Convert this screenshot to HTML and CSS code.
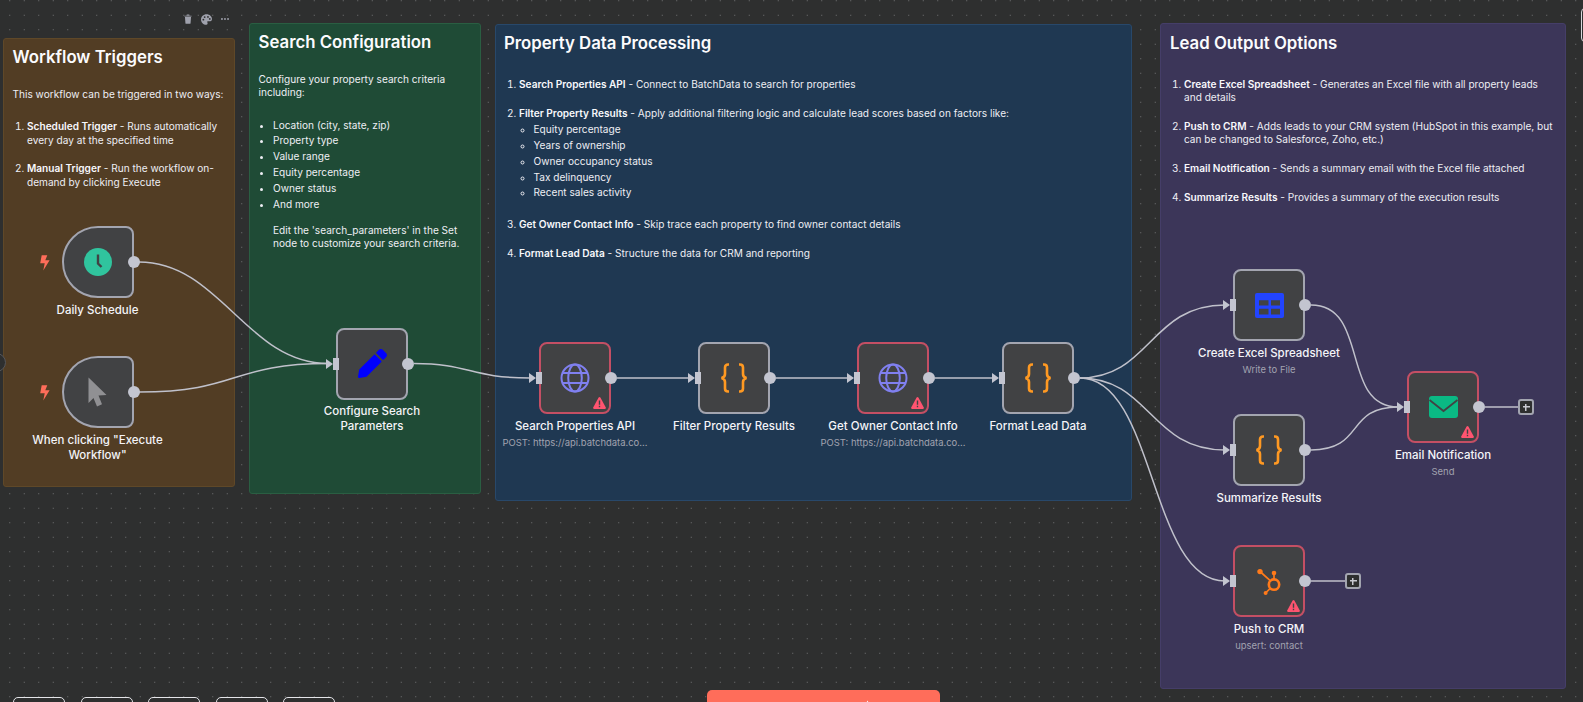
FILE: index.html
```html
<!DOCTYPE html>
<html lang="en">
<head>
    <meta charset="UTF-8">
    <title>Property Lead Workflow</title>
    <link rel="stylesheet" href="styles.css">
</head>
<body>
    <main class="canvas">
        <!-- sticky notes -->
        <section class="sticky sticky-triggers">
            <div class="sticky-tools">
                <svg class="tool-icon tool-trash" viewBox="0 0 10 12"><path d="M0.5 2H9.5V3H0.5ZM3.5 0.5H6.5L7 1.5H3ZM1.2 3.6H8.8L8.2 11.2Q8.1 12 7.3 12H2.7Q1.9 12 1.8 11.2Z"/></svg>
                <svg class="tool-icon tool-palette" viewBox="0 0 12 12"><path fill-rule="evenodd" d="M6 0.2C9.5 0.2 12 2.6 12 5.4C12 7.4 10.4 8 8.8 8H7.6C6.9 8 6.6 8.7 7 9.3C7.5 10.2 7.1 11.8 5.8 11.8C2.6 11.8 0 9.2 0 6C0 2.8 2.7 0.2 6 0.2ZM2.6 5.2A1 1 0 1 0 2.6 7.2A1 1 0 1 0 2.6 5.2ZM4 2.4A1 1 0 1 0 4 4.4A1 1 0 1 0 4 2.4ZM7.6 2.2A1 1 0 1 0 7.6 4.2A1 1 0 1 0 7.6 2.2ZM9.6 4.4A1 1 0 1 0 9.6 6.4A1 1 0 1 0 9.6 4.4Z"/></svg>
                <svg class="tool-icon tool-dots" viewBox="0 0 10 4"><circle cx="1.2" cy="2" r="1.2"/><circle cx="5" cy="2" r="1.2"/><circle cx="8.8" cy="2" r="1.2"/></svg>
            </div>
            <h2>Workflow Triggers</h2>
            <p class="first">This workflow can be triggered in two ways:</p>
            <ol>
                <li><b>Scheduled Trigger</b> - Runs automatically every day at the specified time</li>
                <li><b>Manual Trigger</b> - Run the workflow on-demand by clicking Execute</li>
            </ol>
        </section>

        <section class="sticky sticky-search">
            <h2>Search Configuration</h2>
            <p class="first">Configure your property search criteria including:</p>
            <ul>
                <li>Location (city, state, zip)</li>
                <li>Property type</li>
                <li>Value range</li>
                <li>Equity percentage</li>
                <li>Owner status</li>
                <li>And more</li>
            </ul>
            <p class="search-note">Edit the 'search_parameters' in the Set node to customize your search criteria.</p>
        </section>

        <section class="sticky sticky-property">
            <h2>Property Data Processing</h2>
            <ol>
                <li><b>Search Properties API</b> - Connect to BatchData to search for properties</li>
                <li><b>Filter Property Results</b> - Apply additional filtering logic and calculate lead scores based on factors like:
                    <ul class="sub-list">
                        <li>Equity percentage</li>
                        <li>Years of ownership</li>
                        <li>Owner occupancy status</li>
                        <li>Tax delinquency</li>
                        <li>Recent sales activity</li>
                    </ul>
                </li>
                <li><b>Get Owner Contact Info</b> - Skip trace each property to find owner contact details</li>
                <li><b>Format Lead Data</b> - Structure the data for CRM and reporting</li>
            </ol>
        </section>

        <section class="sticky sticky-output">
            <h2>Lead Output Options</h2>
            <ol>
                <li><b>Create Excel Spreadsheet</b> - Generates an Excel file with all property leads and details</li>
                <li><b>Push to CRM</b> - Adds leads to your CRM system (HubSpot in this example, but can be changed to Salesforce, Zoho, etc.)</li>
                <li><b>Email Notification</b> - Sends a summary email with the Excel file attached</li>
                <li><b>Summarize Results</b> - Provides a summary of the execution results</li>
            </ol>
        </section>

        <!-- connections -->
        <svg class="wires" viewBox="0 0 1583 702">
            <path d="M139 262C220 262 247 363.5 328 363.5"/>
            <path d="M139 392C240 392 230 363.5 328 363.5"/>
            <path d="M414 363.5C470 363.5 470 378 530 378"/>
            <path d="M617 378H689"/>
            <path d="M776 378H848"/>
            <path d="M935 378H993"/>
            <path d="M1080 378C1150 378 1150 305 1225 305"/>
            <path d="M1080 378C1150 378 1150 450 1225 450"/>
            <path d="M1080 378C1155 378 1150 581 1225 581"/>
            <path d="M1311 305C1370 305 1340 407 1398 407"/>
            <path d="M1311 450C1365 450 1345 407 1398 407"/>
            <path d="M1485 407H1519"/>
            <path d="M1311 581H1346"/>
        </svg>

        <!-- nodes -->
        <div class="node node-daily">
            <div class="node-box trigger">
                <svg class="bolt" viewBox="0 0 10 16"><polygon points="1.7,0.3 7.3,0.3 5.3,5.3 9.6,5.3 3.3,15.6 4.7,8.3 0.2,8.3"/></svg>
                <svg class="icon-clock" viewBox="0 0 28 28"><circle cx="14" cy="14" r="14" fill="#30c49e"/><path d="M14 6.5V15.5L17.5 19" fill="none" stroke="#414244" stroke-width="2.4"/></svg>
                <span class="port-out"></span>
            </div>
            <div class="node-label">Daily Schedule</div>
        </div>

        <div class="node node-manual">
            <div class="node-box trigger">
                <svg class="bolt" viewBox="0 0 10 16"><polygon points="1.7,0.3 7.3,0.3 5.3,5.3 9.6,5.3 3.3,15.6 4.7,8.3 0.2,8.3"/></svg>
                <svg class="icon-cursor" viewBox="0 0 19 30"><polygon points="0.5,0.5 18.5,18 10.5,18.6 14,27.2 9,29.5 5.5,21 0.5,26" fill="#909093"/></svg>
                <span class="port-out"></span>
            </div>
            <div class="node-label">When clicking "Execute Workflow"</div>
        </div>

        <div class="node node-config">
            <div class="node-box">
                <span class="port-in"></span>
                <svg class="icon-pen" viewBox="0 0 512 512"><path fill="#0000ff" d="M497.9 142.1l-46.1 46.1c-4.7 4.7-12.3 4.7-17 0l-111-111c-4.7-4.7-4.7-12.3 0-17l46.1-46.1c18.7-18.7 49.1-18.7 67.9 0l60.1 60.1c18.8 18.7 18.8 49.1 0 67.9zM284.2 99.8L21.6 362.4.4 483.9c-2.9 16.4 11.4 30.6 27.8 27.8l121.5-21.3 262.6-262.6c4.7-4.7 4.7-12.3 0-17l-111-111c-4.8-4.7-12.4-4.7-17.1 0z"/></svg>
                <span class="port-out"></span>
            </div>
            <div class="node-label">Configure Search Parameters</div>
        </div>

        <div class="node node-search">
            <div class="node-box has-error">
                <span class="port-in"></span>
                <svg class="icon-globe" viewBox="0 0 30 30"><g fill="none" stroke="#8080f0" stroke-width="2"><circle cx="15" cy="15" r="13.5"/><ellipse cx="15" cy="15" rx="6.8" ry="13.5"/><path d="M3 10H27M3 20H27"/></g></svg>
                <svg class="warn" viewBox="0 0 13 12"><path fill="#ff5470" d="M5.6 0.6Q6.5 -0.4 7.4 0.6L12.8 10.4Q13.3 11.8 12 12H1Q-0.3 11.8 0.2 10.4Z"/><path fill="#414244" d="M5.8 3.6H7.2V7.8H5.8ZM5.8 8.8H7.2V10.2H5.8Z"/></svg>
                <span class="port-out"></span>
            </div>
            <div class="node-label">Search Properties API</div>
            <div class="node-sub">POST: https://api.batchdata.co...</div>
        </div>

        <div class="node node-filter">
            <div class="node-box">
                <span class="port-in"></span>
                <svg class="icon-code" viewBox="0 0 28 30"><path d="M9 1.5H8C6 1.5 5 2.7 5 4.5V11C5 13 3.5 14.5 1.5 15C3.5 15.5 5 17 5 19V25.5C5 27.3 6 28.5 8 28.5H9M19 1.5H20C22 1.5 23 2.7 23 4.5V11C23 13 24.5 14.5 26.5 15C24.5 15.5 23 17 23 19V25.5C23 27.3 22 28.5 20 28.5H19"/></svg>
                <span class="port-out"></span>
            </div>
            <div class="node-label">Filter Property Results</div>
        </div>

        <div class="node node-owner">
            <div class="node-box has-error">
                <span class="port-in"></span>
                <svg class="icon-globe" viewBox="0 0 30 30"><g fill="none" stroke="#8080f0" stroke-width="2"><circle cx="15" cy="15" r="13.5"/><ellipse cx="15" cy="15" rx="6.8" ry="13.5"/><path d="M3 10H27M3 20H27"/></g></svg>
                <svg class="warn" viewBox="0 0 13 12"><path fill="#ff5470" d="M5.6 0.6Q6.5 -0.4 7.4 0.6L12.8 10.4Q13.3 11.8 12 12H1Q-0.3 11.8 0.2 10.4Z"/><path fill="#414244" d="M5.8 3.6H7.2V7.8H5.8ZM5.8 8.8H7.2V10.2H5.8Z"/></svg>
                <span class="port-out"></span>
            </div>
            <div class="node-label">Get Owner Contact Info</div>
            <div class="node-sub">POST: https://api.batchdata.co...</div>
        </div>

        <div class="node node-format">
            <div class="node-box">
                <span class="port-in"></span>
                <svg class="icon-code" viewBox="0 0 28 30"><path d="M9 1.5H8C6 1.5 5 2.7 5 4.5V11C5 13 3.5 14.5 1.5 15C3.5 15.5 5 17 5 19V25.5C5 27.3 6 28.5 8 28.5H9M19 1.5H20C22 1.5 23 2.7 23 4.5V11C23 13 24.5 14.5 26.5 15C24.5 15.5 23 17 23 19V25.5C23 27.3 22 28.5 20 28.5H19"/></svg>
                <span class="port-out"></span>
            </div>
            <div class="node-label">Format Lead Data</div>
        </div>

        <div class="node node-excel">
            <div class="node-box">
                <span class="port-in"></span>
                <svg class="icon-table" viewBox="0 0 29 25"><rect width="29" height="25" rx="2" fill="#2244ff"/><path fill="#414244" d="M4 7.3H13.5V12.5H4ZM16 7.3H25V12.5H16ZM4 15.8H13.5V21.5H4ZM16 15.8H25V21.5H16Z"/></svg>
                <span class="port-out"></span>
            </div>
            <div class="node-label">Create Excel Spreadsheet</div>
            <div class="node-sub">Write to File</div>
        </div>

        <div class="node node-summary">
            <div class="node-box">
                <span class="port-in"></span>
                <svg class="icon-code" viewBox="0 0 28 30"><path d="M9 1.5H8C6 1.5 5 2.7 5 4.5V11C5 13 3.5 14.5 1.5 15C3.5 15.5 5 17 5 19V25.5C5 27.3 6 28.5 8 28.5H9M19 1.5H20C22 1.5 23 2.7 23 4.5V11C23 13 24.5 14.5 26.5 15C24.5 15.5 23 17 23 19V25.5C23 27.3 22 28.5 20 28.5H19"/></svg>
                <span class="port-out"></span>
            </div>
            <div class="node-label">Summarize Results</div>
        </div>

        <div class="node node-email">
            <div class="node-box has-error">
                <span class="port-in"></span>
                <svg class="icon-mail" viewBox="0 0 29 22"><rect width="29" height="22" rx="3" fill="#0ab984"/><path d="M0.5 4L14.5 15L28.5 4" fill="none" stroke="#414244" stroke-width="1.8"/></svg>
                <svg class="warn" viewBox="0 0 13 12"><path fill="#ff5470" d="M5.6 0.6Q6.5 -0.4 7.4 0.6L12.8 10.4Q13.3 11.8 12 12H1Q-0.3 11.8 0.2 10.4Z"/><path fill="#414244" d="M5.8 3.6H7.2V7.8H5.8ZM5.8 8.8H7.2V10.2H5.8Z"/></svg>
                <span class="port-out"></span>
            </div>
            <div class="node-label">Email Notification</div>
            <div class="node-sub">Send</div>
        </div>

        <div class="node node-crm">
            <div class="node-box has-error">
                <span class="port-in"></span>
                <svg class="icon-hubspot" viewBox="0 0 24 28"><g fill="none" stroke="#ff7a1a"><circle cx="17" cy="17.6" r="5.2" stroke-width="2.6"/><path d="M17 6V12M3 4.5L13.2 13.6M8.5 26L13 21.6" stroke-width="1.7"/></g><g fill="#ff7a1a"><circle cx="17" cy="6" r="2.3"/><circle cx="3" cy="4.6" r="2.7"/><circle cx="8.6" cy="26" r="2"/></g></svg>
                <svg class="warn" viewBox="0 0 13 12"><path fill="#ff5470" d="M5.6 0.6Q6.5 -0.4 7.4 0.6L12.8 10.4Q13.3 11.8 12 12H1Q-0.3 11.8 0.2 10.4Z"/><path fill="#414244" d="M5.8 3.6H7.2V7.8H5.8ZM5.8 8.8H7.2V10.2H5.8Z"/></svg>
                <span class="port-out"></span>
            </div>
            <div class="node-label">Push to CRM</div>
            <div class="node-sub">upsert: contact</div>
        </div>

        <span class="add-node add-email"></span>
        <span class="add-node add-crm"></span>

        <!-- bits of canvas chrome cut off by the window -->
        <span class="edge-toggle"></span>
        <span class="edge-corner"></span>
        <div class="zoom-bar">
            <span class="zoom-btn"></span>
            <span class="zoom-btn"></span>
            <span class="zoom-btn"></span>
            <span class="zoom-btn"></span>
            <span class="zoom-btn"></span>
        </div>
        <button class="run-btn"><svg class="run-icon" viewBox="0 0 6 6"><path d="M3 0L6 6H0Z"/></svg></button>
    </main>
</body>
</html>
```

FILE: styles.css
```css
html, body {
    margin: 0;
    padding: 0;
    height: 100%;
    overflow: hidden;
}

body {
    font-family: Inter, "Liberation Sans", sans-serif;
    background-color: #2e2f2f;
    color: #eeeef4;
}

.canvas {
    position: relative;
    width: 1583px;
    height: 702px;
    overflow: hidden;
    background-color: #2e2f2f;
    background-image: radial-gradient(circle at center, #77787a 0.6px, transparent 0.9px);
    background-size: 14.5px 14.5px;
    background-position: 2.5px 8px;
}

/* sticky notes */
.sticky {
    position: absolute;
    box-sizing: border-box;
    border-radius: 3px;
    border: 1px solid;
    font-size: 10.1px;
    line-height: 13.3px;
    padding: 6px 8px 0;
}

.sticky h2 {
    margin: 0;
    font-size: 16.8px;
    line-height: 24px;
    font-weight: 600;
    color: #fbfbfd;
}

.sticky p {
    margin: 0;
}

.sticky b {
    font-weight: 600;
    color: #f8f8fc;
}

.sticky ol, .sticky ul {
    margin: 0;
    padding: 0 0 0 14.5px;
}

.sticky-triggers {
    left: 3px;
    top: 38px;
    width: 232px;
    height: 449px;
    background: #523d24;
    border-color: #5f4828;
    padding-left: 8.5px;
}

.sticky-triggers .first {
    margin-top: 19px;
    white-space: nowrap;
}

.sticky-triggers ol {
    margin-top: 19px;
}

.sticky-triggers li {
    margin-bottom: 15.5px;
}

.sticky-tools {
    position: absolute;
    top: -26px;
    right: 5px;
    height: 12px;
    display: flex;
    gap: 9px;
    align-items: center;
}

.tool-icon {
    fill: #9fa1ac;
}

.tool-trash {
    width: 8px;
    height: 10px;
}

.tool-palette {
    width: 11px;
    height: 11px;
}

.tool-dots {
    width: 8px;
    height: 4px;
}

.sticky-search {
    left: 249px;
    top: 23px;
    width: 232px;
    height: 471px;
    background: #1f4b36;
    border-color: #2a5e42;
    padding-left: 8.5px;
}

.sticky-search .first {
    margin-top: 19px;
}

.sticky-search ul {
    margin-top: 19px;
}

.sticky-search li {
    margin-bottom: 2.5px;
}

.search-note {
    padding-left: 14.5px;
    padding-top: 10.5px;
}

.sticky-property {
    left: 495px;
    top: 24px;
    width: 637px;
    height: 477px;
    background: #1f3852;
    border-color: #28486a;
}

.sticky-property ol, .sticky-output ol {
    margin-top: 23px;
    padding-left: 15px;
}

.sticky-property > ol > li, .sticky-output > ol > li {
    margin-bottom: 15.6px;
}

.sub-list {
    margin-top: 3px !important;
    padding-left: 14.5px !important;
    padding-bottom: 0.1px !important;
    list-style-type: circle;
}

.sub-list li {
    margin-bottom: 2.5px;
}

.sticky-output {
    left: 1160px;
    top: 23px;
    width: 406px;
    height: 666px;
    background: #3c3659;
    border-color: #453e68;
    padding-top: 7px;
    padding-left: 9px;
}

.sticky-output ol {
    padding-left: 14px;
}

/* connections */
.wires {
    position: absolute;
    left: 0;
    top: 0;
    width: 1583px;
    height: 702px;
}

.wires path {
    fill: none;
    stroke: #c0c1cb;
    stroke-width: 1.5;
}

/* nodes */
.node {
    position: absolute;
    width: 160px;
    display: flex;
    flex-direction: column;
    align-items: center;
    text-align: center;
}

.node-box {
    position: relative;
    box-sizing: border-box;
    width: 72px;
    height: 72px;
    flex: none;
    display: flex;
    align-items: center;
    justify-content: center;
    background: #414244;
    border: 2px solid #a3a5b0;
    border-radius: 8px;
}

.node-box.trigger {
    border-radius: 36px 8px 8px 36px;
}

.node-box.has-error {
    border-color: #c44f64;
}

.node-label {
    margin-top: 4.5px;
    width: 146px;
    font-size: 11.5px;
    line-height: 15px;
    font-weight: 500;
    color: #f4f4f8;
}

.node-sub {
    margin-top: 2px;
    font-size: 9.45px;
    line-height: 13px;
    white-space: nowrap;
    color: #a2a3b0;
}

.port-out {
    position: absolute;
    right: -8px;
    top: 28px;
    width: 12px;
    height: 12px;
    border-radius: 50%;
    background: #c3c5d0;
}

.port-in {
    position: absolute;
    left: -5px;
    top: 28px;
    width: 6px;
    height: 12px;
    background: #c3c5d0;
}

.port-in::before {
    content: "";
    position: absolute;
    right: 100%;
    top: 1px;
    border-style: solid;
    border-width: 5px 0 5px 7px;
    border-color: transparent transparent transparent #c3c5d0;
}

.bolt {
    position: absolute;
    left: -24px;
    top: 26.5px;
    width: 10px;
    height: 16px;
    fill: #ff6d5a;
}

.warn {
    position: absolute;
    right: 3.5px;
    bottom: 3px;
    width: 13px;
    height: 12px;
}

.node-daily { left: 17.5px; top: 226px; }
.node-manual { left: 17.5px; top: 356px; }
.node-config { left: 292px; top: 327.5px; }
.node-search { left: 495px; top: 342px; }
.node-filter { left: 654px; top: 342px; }
.node-owner { left: 813px; top: 342px; }
.node-format { left: 958px; top: 342px; }
.node-excel { left: 1189px; top: 269px; }
.node-summary { left: 1189px; top: 414px; }
.node-email { left: 1363px; top: 371px; }
.node-crm { left: 1189px; top: 545px; }

.icon-clock { width: 28px; height: 28px; }
.icon-cursor { width: 19px; height: 30px; }
.icon-pen { width: 29px; height: 29px; }
.icon-globe { width: 30px; height: 30px; }
.icon-table { width: 29px; height: 25px; }
.icon-mail { width: 29px; height: 22px; }
.icon-hubspot { width: 24px; height: 28px; }

.icon-code {
    width: 28px;
    height: 30px;
    fill: none;
    stroke: #ff9922;
    stroke-width: 2.6;
}

/* plus buttons at the end of open outputs */
.add-node {
    position: absolute;
    box-sizing: border-box;
    width: 16px;
    height: 16px;
    border: 2px solid #a3a5b0;
    border-radius: 3px;
    background-color: #2e2f2f;
    background-image: linear-gradient(#c8c9d1, #c8c9d1), linear-gradient(#c8c9d1, #c8c9d1);
    background-size: 7px 1.5px, 1.5px 7px;
    background-position: center;
    background-repeat: no-repeat;
}

.add-email { left: 1518px; top: 399px; }
.add-crm { left: 1345px; top: 573px; }

/* canvas chrome */
.edge-toggle {
    position: absolute;
    left: -13px;
    top: 353px;
    width: 17px;
    height: 17px;
    border: 1px solid #55565a;
    border-radius: 50%;
    background: #2e2f2f;
}

.edge-corner {
    position: absolute;
    right: -8px;
    top: 8px;
    width: 8px;
    height: 32px;
    border: 1px solid #d8d8dc;
    border-radius: 4px;
}

.zoom-bar {
    position: absolute;
    left: 13px;
    top: 697px;
    display: flex;
    gap: 15.6px;
}

.zoom-btn {
    box-sizing: border-box;
    width: 52px;
    height: 40px;
    background: #2e2f2f;
    border: 1px solid #e4e4e8;
    border-radius: 5px;
}

.run-btn {
    position: absolute;
    left: 707px;
    top: 690px;
    width: 233px;
    height: 48px;
    padding: 0;
    border: none;
    border-radius: 5px;
    background: #ff6d5a;
}

.run-icon {
    position: absolute;
    left: 158px;
    top: 10px;
    width: 5px;
    height: 6px;
    fill: #ffffff;
}
```
